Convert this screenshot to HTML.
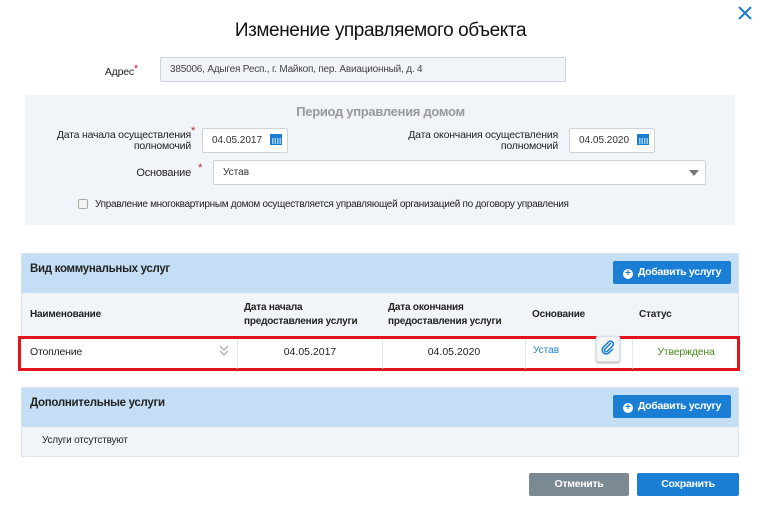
<!DOCTYPE html>
<html><head><meta charset="utf-8"><style>
*{box-sizing:border-box;margin:0;padding:0}
body{width:761px;height:507px;background:#fff;font-family:"Liberation Sans",sans-serif;color:#222;position:relative;overflow:hidden;font-size:10px}
.a{position:absolute}
.title{left:0;width:761px;top:20px;text-align:center;font-size:19px;color:#111;letter-spacing:-0.4px}
.inp{position:absolute;border:1px solid #ccd3da;background:#fff;font-size:10px;padding-left:9px;line-height:23px;border-radius:2px}
.lbl{position:absolute;text-align:right;font-size:10.5px;line-height:11px;color:#222;letter-spacing:-0.2px}
.star{color:#c0262d;font-size:11px;vertical-align:top;position:relative;top:-3px}
.btn{position:absolute;background:#1a7fd4;color:#fff;font-size:10.5px;font-weight:bold;text-align:center;border-radius:2px;line-height:23px;letter-spacing:-0.3px}
.sect{position:absolute;left:21px;width:718px;border:1px solid #dde3e8}
.hd{background:#c4dff5;font-size:11.5px;font-weight:bold;color:#222;padding:9px 0 0 8px;position:relative;letter-spacing:-0.3px}
.th{position:absolute;font-size:10px;font-weight:bold;line-height:14px;color:#222;letter-spacing:-0.2px}
.cal{position:absolute;width:12px;height:11px;background:#1a7fd4;border-top:3px solid #1a7fd4}
.cal:after{content:"";position:absolute;left:1px;top:1px;width:10px;height:6px;background:repeating-linear-gradient(90deg,#1a7fd4 0 1px,#9cc8ef 1px 2.5px)}
</style></head><body>
<div class="a title">Изменение управляемого объекта</div>
<svg class="a" style="left:737px;top:5px" width="16" height="16"><path d="M2 2L14 14M14 2L2 14" stroke="#1a7fd4" stroke-width="2"/></svg>

<div class="lbl" style="left:60px;width:78px;top:67px">Адрес<span class="star">*</span></div>
<div class="inp" style="left:160px;top:57px;width:406px;height:25px;background:#f1f4f8;color:#444;letter-spacing:-0.2px">385006, Адыгея Респ., г. Майкоп, пер. Авиационный, д. 4</div>

<div class="a" style="left:25px;top:95px;width:710px;height:130px;background:#f1f4f8"></div>
<div class="a" style="left:0;width:761px;top:104px;text-align:center;font-size:13px;color:#999;font-weight:bold;letter-spacing:-0.3px">Период управления домом</div>

<div class="lbl" style="left:40px;width:151px;top:130px">Дата начала осуществления<br>полномочий</div>
<span class="star a" style="left:191px;top:125px">*</span>
<div class="inp" style="left:202px;top:128px;width:86px;height:25px;color:#333">04.05.2017</div>
<div class="cal" style="left:270px;top:134px"></div>

<div class="lbl" style="left:380px;width:178px;top:130px">Дата окончания осуществления<br>полномочий</div>
<div class="inp" style="left:569px;top:128px;width:86px;height:25px;color:#333">04.05.2020</div>
<div class="cal" style="left:637px;top:134px"></div>

<div class="lbl" style="left:100px;width:91px;top:168px;font-size:11px">Основание</div>
<span class="star a" style="left:191px;top:162px">*</span>
<div class="inp" style="left:213px;top:160px;width:493px;height:25px;color:#333">Устав</div>
<div class="a" style="left:689px;top:170px;border-left:5px solid transparent;border-right:5px solid transparent;border-top:6px solid #777"></div>

<div class="a" style="left:78px;top:199px;width:10px;height:10px;border:1px solid #aaa;background:#f4f4f4;border-radius:2px"></div>
<div class="a" style="left:95px;top:199px;font-size:10px;color:#222;letter-spacing:-0.3px">Управление многоквартирным домом осуществляется управляющей организацией по договору управления</div>

<div class="sect" style="top:253px;height:117px">
 <div class="hd" style="height:39px">Вид коммунальных услуг</div>
 <div style="background:#f1f4f8;height:44px;position:relative">
  <div class="th" style="left:8px;top:15px">Наименование</div>
  <div class="th" style="left:222px;top:8px">Дата начала<br>предоставления услуги</div>
  <div class="th" style="left:366px;top:8px">Дата окончания<br>предоставления услуги</div>
  <div class="th" style="left:510px;top:15px">Основание</div>
  <div class="th" style="left:617px;top:15px">Статус</div>
 </div>
</div>
<div class="btn" style="left:613px;top:261px;width:118px"><span style="display:inline-block;width:10px;height:10px;border-radius:50%;background:#fff;color:#1a7fd4;line-height:10px;font-size:10px;margin-right:5px;vertical-align:-1px;letter-spacing:0">+</span>Добавить услугу</div>

<div class="a" style="left:18px;top:336px;width:722px;height:35px;border:3px solid #e3141b;background:#fff"></div>
<div class="a" style="left:237px;top:339px;width:1px;height:30px;background:#e6e9ec"></div>
<div class="a" style="left:382px;top:339px;width:1px;height:30px;background:#e6e9ec"></div>
<div class="a" style="left:525px;top:339px;width:1px;height:30px;background:#e6e9ec"></div>
<div class="a" style="left:632px;top:339px;width:1px;height:30px;background:#e6e9ec"></div>
<div class="a" style="left:30px;top:346px;font-size:10.5px;letter-spacing:-0.2px">Отопление</div>
<svg class="a" style="left:218px;top:344px" width="12" height="14"><path d="M2 2l4 4 4-4M2 7l4 4 4-4" stroke="#bbb" stroke-width="1.6" fill="none"/></svg>
<div class="a" style="left:238px;width:144px;top:346px;text-align:center;font-size:10.5px">04.05.2017</div>
<div class="a" style="left:382px;width:144px;top:346px;text-align:center;font-size:10.5px">04.05.2020</div>
<div class="a" style="left:533px;top:345px;font-size:10px;color:#1a7fd4">Устав</div>
<div class="a" style="left:596px;top:336px;width:24px;height:26px;background:#f4f6f8;border:1px solid #dde;border-radius:2px;box-shadow:0 1px 2px #aaa"></div>
<svg class="a" style="left:600px;top:340px" width="16" height="16"><path d="M11 3L5 9a1.6 1.6 0 0 0 2.3 2.3L12.5 6a2.8 2.8 0 0 0-4-4L3 7.5a4 4 0 0 0 5.6 5.6L13 9" stroke="#1a7fd4" stroke-width="1.5" fill="none"/></svg>
<div class="a" style="left:633px;width:106px;top:346px;text-align:center;font-size:10.5px;color:#4a8a1e;letter-spacing:-0.2px">Утверждена</div>

<div class="sect" style="top:387px;height:70px">
 <div class="hd" style="height:39px">Дополнительные услуги</div>
 <div style="background:#f1f4f8;height:29px;padding:8px 0 0 20px;font-size:10px;letter-spacing:-0.2px">Услуги отсутствуют</div>
</div>
<div class="btn" style="left:613px;top:395px;width:118px"><span style="display:inline-block;width:10px;height:10px;border-radius:50%;background:#fff;color:#1a7fd4;line-height:10px;font-size:10px;margin-right:5px;vertical-align:-1px;letter-spacing:0">+</span>Добавить услугу</div>

<div class="btn" style="left:529px;top:473px;width:100px;background:#7b8993">Отменить</div>
<div class="btn" style="left:637px;top:473px;width:102px">Сохранить</div>
</body></html>
